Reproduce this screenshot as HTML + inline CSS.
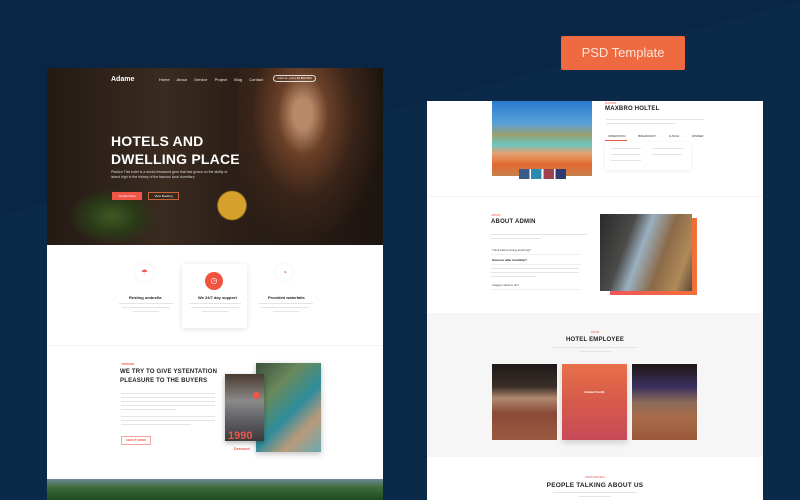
<!DOCTYPE html>
<html><head><meta charset="utf-8"><style>
*{margin:0;padding:0;box-sizing:border-box}
body{width:800px;height:500px;overflow:hidden;background:linear-gradient(165deg,#0a2644 0%,#0a2644 30%,#0b2a49 30.5%,#0b2a49 100%);font-family:"Liberation Sans",sans-serif;position:relative}
.a{position:absolute}
.t{position:absolute;white-space:nowrap}
.ln{position:absolute;height:1px;background:#e4e4e4}
.h{font-weight:bold;color:#222;letter-spacing:.2px}
</style></head><body>
<div class="a" style="left:561px;top:36px;width:124px;height:34px;background:#ef6a40;border-radius:2px;color:#fde5da;font-size:13px;text-align:center;line-height:34px">PSD Template</div>

<!-- LEFT PANEL -->
<div class="a" style="left:47px;top:68px;width:336px;height:432px;background:#fff;overflow:hidden">
 <div class="a" style="left:0;top:0;width:336px;height:177px;background:linear-gradient(90deg,#231a14 0%,#3a2b20 35%,#2b1f17 55%,#1d1510 100%)"></div>
 <div class="a" style="left:190px;top:-10px;width:146px;height:187px;background:radial-gradient(ellipse at 45% 30%,#b98a68 0 8%,#6a4028 22%,#3a2418 45%,transparent 72%)"></div>
 <div class="a" style="left:160px;top:120px;width:50px;height:35px;background:radial-gradient(circle,#d6a12a 0 45%,transparent 50%)"></div>
 <div class="a" style="left:20px;top:120px;width:90px;height:57px;background:radial-gradient(ellipse,#3d5a22 0,#2a3a18 40%,transparent 70%)"></div>
 <div class="t" style="left:64px;top:8px;color:#fff;font-size:7px;font-weight:bold">Adame</div>
 <div class="t" style="left:112px;top:9px;color:#eee;font-size:4px;word-spacing:6px">Home About Service Project Blog Contact</div>
 <div class="a" style="left:226px;top:7px;width:43px;height:7px;border:1px solid #ddd;border-radius:4px;color:#fff;font-size:3px;text-align:center;line-height:5px">Call Us: (+01) 99 809 890</div>
 <div class="t h" style="left:64px;top:64px;color:#fff;font-size:14px;line-height:18px">HOTELS AND<br>DWELLING PLACE</div>
 <div class="t" style="left:64px;top:102px;color:#ddd;font-size:3.5px;line-height:5px">Plaidon This hotel is a world-renowned gem that has grown on the ability of<br>island high in the history of the famous local dormitory</div>
 <div class="a" style="left:65px;top:124px;width:30px;height:8px;background:#f05548;color:#fff;font-size:3px;text-align:center;line-height:8px">Contact Now</div>
 <div class="a" style="left:101px;top:124px;width:31px;height:8px;border:1px solid #c8653a;color:#fff;font-size:3px;text-align:center;line-height:6px">View Booking</div>

 <div class="a" style="left:89px;top:196px;width:17px;height:17px;border-radius:50%;background:#fff;box-shadow:0 0 4px #eee;color:#f05548;font-size:8px;text-align:center;line-height:17px">☂</div>
 <div class="a" style="left:135px;top:196px;width:65px;height:64px;background:#fff;box-shadow:0 1px 5px rgba(0,0,0,.12)"></div>
 <div class="a" style="left:158px;top:204px;width:18px;height:18px;border-radius:50%;background:#f2533f;color:#fff;font-size:8px;text-align:center;line-height:18px">◷</div>
 <div class="a" style="left:229px;top:196px;width:17px;height:17px;border-radius:50%;background:#fff;box-shadow:0 0 4px #eee;color:#f05548;font-size:8px;text-align:center;line-height:17px">◔</div>
 <div class="t" style="left:82px;top:227px;font-size:4px;font-weight:bold;color:#222">Resting umbrella</div>
 <div class="t" style="left:151px;top:227px;font-size:4px;font-weight:bold;color:#222">We 24/7 day support</div>
 <div class="t" style="left:221px;top:227px;font-size:4px;font-weight:bold;color:#222">Provided waterfalls</div>
 <div class="ln" style="left:72px;top:235px;width:54px"></div><div class="ln" style="left:75px;top:239px;width:48px"></div><div class="ln" style="left:86px;top:243px;width:26px"></div>
 <div class="ln" style="left:142px;top:235px;width:52px"></div><div class="ln" style="left:144px;top:239px;width:48px"></div><div class="ln" style="left:155px;top:243px;width:26px"></div>
 <div class="ln" style="left:212px;top:235px;width:54px"></div><div class="ln" style="left:214px;top:239px;width:48px"></div><div class="ln" style="left:226px;top:243px;width:26px"></div>
 <div class="ln" style="left:0;top:277px;width:336px;background:#f4f4f4"></div>

 <div class="t" style="left:74px;top:294px;font-size:3px;color:#f05548;font-weight:bold">TOWARD</div>
 <div class="t h" style="left:73px;top:300px;font-size:6px;line-height:9px;color:#222">WE TRY TO GIVE YSTENTATION<br>PLEASURE TO THE BUYERS</div>
 <div class="ln" style="left:74px;top:325px;width:94px"></div><div class="ln" style="left:74px;top:329px;width:94px"></div><div class="ln" style="left:74px;top:333px;width:94px"></div><div class="ln" style="left:74px;top:337px;width:94px"></div><div class="ln" style="left:74px;top:341px;width:55px"></div>
 <div class="ln" style="left:74px;top:348px;width:94px"></div><div class="ln" style="left:74px;top:352px;width:94px"></div><div class="ln" style="left:74px;top:356px;width:70px"></div>
 <div class="a" style="left:74px;top:368px;width:30px;height:9px;border:1px solid #f3a39b;color:#f05548;font-size:3px;font-weight:bold;text-align:center;line-height:7px">ABOUT MORE</div>
 <div class="a" style="left:209px;top:295px;width:65px;height:89px;background:linear-gradient(135deg,#3d5040 0,#6a8a5c 30%,#2e8c9c 55%,#b99a7a 75%,#6aa8b2 100%);box-shadow:0 2px 6px rgba(0,0,0,.25)"></div>
 <div class="a" style="left:178px;top:306px;width:39px;height:67px;background:linear-gradient(180deg,#4a3a30 0,#8a8a8a 40%,#5d5d64 70%,#3a3a3a 100%);box-shadow:0 2px 5px rgba(0,0,0,.3)"></div>
 <div class="a" style="left:206px;top:324px;width:7px;height:7px;border-radius:50%;background:#f05548"></div>
 <div class="t" style="left:181px;top:362px;font-size:11px;font-weight:bold;color:#f05548">1990</div>
 <div class="t" style="left:187px;top:378px;font-size:4px;font-weight:bold;color:#f05548">Dressed</div>
 <div class="a" style="left:0;top:411px;width:336px;height:21px;background:linear-gradient(180deg,#6d8a96 0,#3f6a3c 40%,#1f4a1e 100%)"></div>
</div>

<!-- RIGHT PANEL -->
<div class="a" style="left:427px;top:101px;width:336px;height:399px;background:#fff;overflow:hidden">
 <div class="a" style="left:65px;top:0;width:100px;height:75px;background:linear-gradient(180deg,#2a7ad0 0,#5aa0d8 30%,#9aa070 45%,#6ac6c0 58%,#e8a070 70%,#e06a30 85%,#c78050 100%)"></div>
 <div class="a" style="left:92px;top:68px;width:47px;height:10px;background:linear-gradient(90deg,#3a5a8a 0 22%,#fff 22% 26%,#2a8ab0 26% 48%,#fff 48% 52%,#a04050 52% 74%,#fff 74% 78%,#303a70 78%)"></div>
 <div class="t" style="left:178px;top:0px;font-size:3px;color:#f05548">ROOMS</div>
 <div class="t h" style="left:178px;top:5px;font-size:6px">MAXBRO HOLTEL</div>
 <div class="ln" style="left:179px;top:18px;width:98px"></div><div class="ln" style="left:179px;top:22px;width:70px"></div>
 <div class="t" style="left:181px;top:33px;font-size:3px;color:#333;word-spacing:12px">OPERATION BREAKFAST LUNCH DINNER</div>
 <div class="ln" style="left:178px;top:39px;width:22px;background:#f05548"></div>
 <div class="a" style="left:178px;top:41px;width:86px;height:28px;background:#fff;box-shadow:0 1px 4px rgba(0,0,0,.08)"></div>
 <div class="ln" style="left:184px;top:47px;width:30px"></div><div class="ln" style="left:184px;top:53px;width:30px"></div><div class="ln" style="left:184px;top:59px;width:30px"></div>
 <div class="ln" style="left:225px;top:47px;width:32px"></div><div class="ln" style="left:225px;top:53px;width:30px"></div>
 <div class="ln" style="left:0;top:95px;width:336px;background:#f3f3f3"></div>

 <div class="t" style="left:64px;top:112px;font-size:3px;color:#f05548">ADMIN</div>
 <div class="t h" style="left:64px;top:118px;font-size:6px">ABOUT ADMIN</div>
 <div class="ln" style="left:64px;top:133px;width:96px"></div><div class="ln" style="left:64px;top:137px;width:50px"></div>
 <div class="t" style="left:65px;top:147px;font-size:3px;color:#444">Think before doing anything?</div>
 <div class="ln" style="left:64px;top:153px;width:90px;background:#f0f0f0"></div>
 <div class="t" style="left:65px;top:157px;font-size:3px;color:#222;font-weight:bold">Success after hardship?</div>
 <div class="ln" style="left:64px;top:163px;width:90px;background:#f0f0f0"></div>
 <div class="ln" style="left:64px;top:167px;width:88px"></div><div class="ln" style="left:64px;top:171px;width:88px"></div><div class="ln" style="left:64px;top:175px;width:45px"></div>
 <div class="t" style="left:65px;top:182px;font-size:3px;color:#444">Imagine what to do?</div>
 <div class="ln" style="left:64px;top:188px;width:90px;background:#f0f0f0"></div>
 <div class="a" style="left:183px;top:117px;width:87px;height:77px;background:linear-gradient(90deg,#f0555a,#f07038)"></div>
 <div class="a" style="left:173px;top:113px;width:92px;height:77px;background:linear-gradient(110deg,#2a2a2a 0,#4a4a48 30%,#9ab0c0 45%,#8a6a48 65%,#b08a58 85%,#5a4a3a 100%)"></div>

 <div class="a" style="left:0;top:212px;width:336px;height:144px;background:#f6f6f6"></div>
 <div class="t" style="left:0;width:336px;text-align:center;top:229px;font-size:3px;color:#f05548">TEAM</div>
 <div class="t h" style="left:0;width:336px;text-align:center;top:236px;font-size:6px">HOTEL EMPLOYEE</div>
 <div class="ln" style="left:126px;top:246px;width:84px"></div><div class="ln" style="left:152px;top:250px;width:32px"></div>
 <div class="a" style="left:65px;top:263px;width:65px;height:76px;background:linear-gradient(180deg,#1e1a18 0,#3a2e28 30%,#b08a70 45%,#8a4a38 65%,#9a5a40 100%)"></div>
 <div class="a" style="left:135px;top:263px;width:65px;height:76px;background:linear-gradient(180deg,#e8704a 0,#d65a4a 50%,#c84a58 100%);box-shadow:0 3px 6px rgba(0,0,0,.15)"></div>
 <div class="t" style="left:135px;width:65px;text-align:center;top:289px;font-size:3px;color:#fff;font-weight:bold">Edward Smith</div>
 <div class="a" style="left:205px;top:263px;width:65px;height:76px;background:linear-gradient(180deg,#1e1614 0,#3a3060 30%,#8a6a5a 50%,#a86a48 70%,#9a5a3a 100%)"></div>
 <div class="t" style="left:0;width:336px;text-align:center;top:374px;font-size:3px;color:#f05548">TESTIMONIAL</div>
 <div class="t h" style="left:0;width:336px;text-align:center;top:381px;font-size:6.5px">PEOPLE TALKING ABOUT US</div>
 <div class="ln" style="left:126px;top:391px;width:84px"></div><div class="ln" style="left:152px;top:395px;width:32px"></div>
</div>
</body></html>
